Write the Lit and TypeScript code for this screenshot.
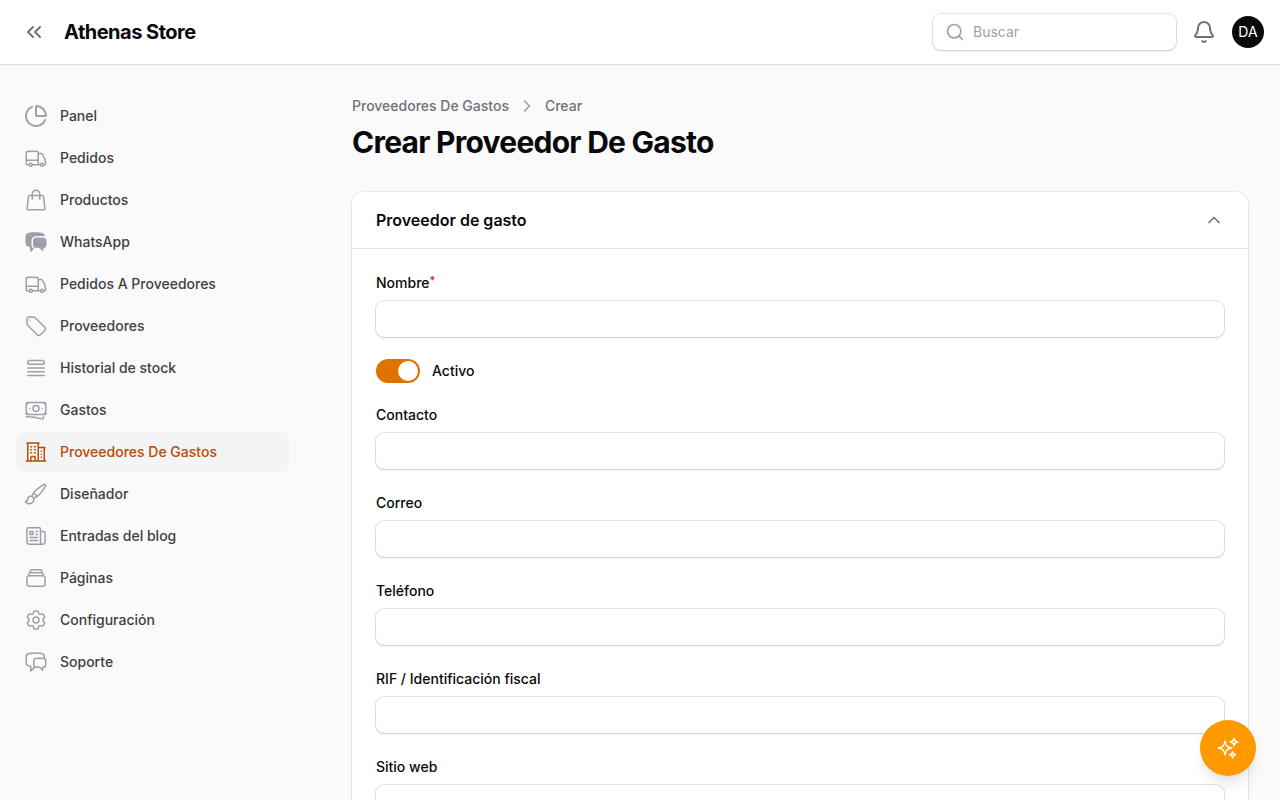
import { LitElement, html, svg, css } from "lit";
import { customElement, property } from "lit/decorators.js";
import { classMap } from "lit/directives/class-map.js";

const ICONS: Record<string, string[]> = {
  panel: [
    "M21 12c.552 0 1.005-.449.95-.998a10 10 0 0 0-8.953-8.951c-.55-.055-.998.398-.998.95v8a1 1 0 0 0 1 1z",
    "M21.21 15.89A10 10 0 1 1 8 2.83",
  ],
  truck: [
    "M8.25 18.75a1.5 1.5 0 0 1-3 0m3 0a1.5 1.5 0 0 0-3 0m3 0h6m-9 0H3.375a1.125 1.125 0 0 1-1.125-1.125V14.25m17.25 4.5a1.5 1.5 0 0 1-3 0m3 0a1.5 1.5 0 0 0-3 0m3 0h1.125c.621 0 1.129-.504 1.09-1.124a17.902 17.902 0 0 0-3.213-9.193 2.056 2.056 0 0 0-1.58-.86H14.25M16.5 18.75h-2.25m0-11.177v-.958c0-.568-.422-1.048-.987-1.106a48.554 48.554 0 0 0-10.026 0 1.106 1.106 0 0 0-.987 1.106v7.635m12-6.677v6.677m0 4.5v-4.5m0 0h-12",
  ],
  bag: [
    "M15.75 10.5V6a3.75 3.75 0 1 0-7.5 0v4.5m11.356-1.993 1.263 12c.07.665-.45 1.243-1.119 1.243H4.25a1.125 1.125 0 0 1-1.12-1.243l1.264-12A1.125 1.125 0 0 1 5.513 7.5h12.974c.576 0 1.059.435 1.119 1.007ZM8.625 10.5a.375.375 0 1 1-.75 0 .375.375 0 0 1 .75 0Zm7.5 0a.375.375 0 1 1-.75 0 .375.375 0 0 1 .75 0Z",
  ],
  chatSolid: [
    "M4.913 2.658c2.075-.27 4.19-.408 6.337-.408 2.147 0 4.262.139 6.337.408 1.922.25 3.291 1.861 3.405 3.727a4.403 4.403 0 0 0-1.032-.211 50.89 50.89 0 0 0-8.42 0c-2.358.196-4.04 2.19-4.04 4.434v4.286a4.47 4.47 0 0 0 2.433 3.984L7.28 21.53A.75.75 0 0 1 6 21v-4.03a48.527 48.527 0 0 1-1.087-.128C2.905 16.58 1.5 14.833 1.5 12.862V6.638c0-1.97 1.405-3.718 3.413-3.979Z",
    "M15.75 7.5c-1.376 0-2.739.057-4.086.169C10.124 7.797 9 9.103 9 10.609v4.285c0 1.507 1.128 2.814 2.67 2.94 1.243.102 2.5.157 3.768.165l2.782 2.781a.75.75 0 0 0 1.28-.53v-2.39l.33-.026c1.542-.125 2.67-1.433 2.67-2.94v-4.286c0-1.505-1.125-2.811-2.664-2.94A49.392 49.392 0 0 0 15.75 7.5Z",
  ],
  tag: [
    "M9.568 3H5.25A2.25 2.25 0 0 0 3 5.25v4.318c0 .597.237 1.17.659 1.591l9.581 9.581c.699.699 1.78.872 2.607.33a18.095 18.095 0 0 0 5.223-5.223c.542-.827.369-1.908-.33-2.607L11.16 3.66A2.25 2.25 0 0 0 9.568 3Z",
    "M6 6h.008v.008H6V6Z",
  ],
  list: [
    "M3.75 12h16.5m-16.5 3.75h16.5M3.75 19.5h16.5M5.625 4.5h12.75a1.875 1.875 0 0 1 0 3.75H5.625a1.875 1.875 0 0 1 0-3.75Z",
  ],
  banknotes: [
    "M2.25 18.75a60.07 60.07 0 0 1 15.797 2.101c.727.198 1.453-.342 1.453-1.096V18.75M3.75 4.5v.75A.75.75 0 0 1 3 6h-.75m0 0v-.375c0-.621.504-1.125 1.125-1.125H20.25M2.25 6v9m18-10.5v.75c0 .414.336.75.75.75h.75m-1.5-1.5h.375c.621 0 1.125.504 1.125 1.125v9.75c0 .621-.504 1.125-1.125 1.125h-.375m1.5-1.5H21a.75.75 0 0 0-.75.75v.75m0 0H3.75m0 0h-.375a1.125 1.125 0 0 1-1.125-1.125V15m1.5 1.5v-.75A.75.75 0 0 0 3 15h-.75M15 10.5a3 3 0 1 1-6 0 3 3 0 0 1 6 0Zm3 0h.008v.008H18V10.5Zm-12 0h.008v.008H6V10.5Z",
  ],
  building: [
    "M2.25 21h19.5m-18-18v18m10.5-18v18m6-13.5V21M6.75 6.75h.75m-.75 3h.75m-.75 3h.75m3-6h.75m-.75 3h.75m-.75 3h.75M6.75 21v-3.375c0-.621.504-1.125 1.125-1.125h2.25c.621 0 1.125.504 1.125 1.125V21M3 3h12m-.75 4.5H21m-3.75 3.75h.008v.008h-.008v-.008Zm0 3h.008v.008h-.008v-.008Zm0 3h.008v.008h-.008v-.008Z",
  ],
  brush: [
    "M9.53 16.122a3 3 0 0 0-5.78 1.128 2.25 2.25 0 0 1-2.4 2.245 4.5 4.5 0 0 0 8.4-2.245c0-.399-.078-.78-.22-1.128Zm0 0a15.998 15.998 0 0 0 3.388-1.62m-5.043-.025a15.994 15.994 0 0 1 1.622-3.395m3.42 3.42a15.995 15.995 0 0 0 4.764-4.648l3.876-5.814a1.151 1.151 0 0 0-1.597-1.597L14.146 6.32a15.996 15.996 0 0 0-4.649 4.763m3.42 3.42a6.776 6.776 0 0 0-3.42-3.42",
  ],
  newspaper: [
    "M12 7.5h1.5m-1.5 3h1.5m-7.5 3h7.5m-7.5 3h7.5m3-9h3.375c.621 0 1.125.504 1.125 1.125V18a2.25 2.25 0 0 1-2.25 2.25M16.5 7.5V18a2.25 2.25 0 0 0 2.25 2.25M16.5 7.5V4.875c0-.621-.504-1.125-1.125-1.125H4.125C3.504 3.75 3 4.254 3 4.875V18a2.25 2.25 0 0 0 2.25 2.25h13.5M6 7.5h3v3H6v-3Z",
  ],
  stack: [
    "M6 6.878V6a2.25 2.25 0 0 1 2.25-2.25h7.5A2.25 2.25 0 0 1 18 6v.878m-12 0c.235-.083.487-.128.75-.128h10.5c.263 0 .515.045.75.128m-12 0A2.25 2.25 0 0 0 4.5 9v.878m13.5-3A2.25 2.25 0 0 1 19.5 9v.878m0 0a2.246 2.246 0 0 0-.75-.128H5.25c-.263 0-.515.045-.75.128m15 0A2.25 2.25 0 0 1 21 12v6a2.25 2.25 0 0 1-2.25 2.25H5.25A2.25 2.25 0 0 1 3 18v-6c0-.98.626-1.813 1.5-2.122",
  ],
  cog: [
    "M9.594 3.94c.09-.542.56-.94 1.11-.94h2.593c.55 0 1.02.398 1.11.94l.213 1.281c.063.374.313.686.645.87.074.04.147.083.22.127.325.196.72.257 1.075.124l1.217-.456a1.125 1.125 0 0 1 1.37.49l1.296 2.247a1.125 1.125 0 0 1-.26 1.431l-1.003.827c-.293.241-.438.613-.43.992a7.723 7.723 0 0 1 0 .255c-.008.378.137.75.43.991l1.004.827c.424.35.534.955.26 1.43l-1.298 2.247a1.125 1.125 0 0 1-1.369.491l-1.217-.456c-.355-.133-.75-.072-1.076.124a6.47 6.47 0 0 1-.22.128c-.331.183-.581.495-.644.869l-.213 1.281c-.09.543-.56.94-1.11.94h-2.594c-.55 0-1.019-.398-1.11-.94l-.213-1.281c-.062-.374-.312-.686-.644-.87a6.52 6.52 0 0 1-.22-.127c-.325-.196-.72-.257-1.076-.124l-1.217.456a1.125 1.125 0 0 1-1.369-.49l-1.297-2.247a1.125 1.125 0 0 1 .26-1.431l1.004-.827c.292-.24.437-.613.43-.991a6.932 6.932 0 0 1 0-.255c.007-.38-.138-.751-.43-.992l-1.004-.827a1.125 1.125 0 0 1-.26-1.43l1.297-2.247a1.125 1.125 0 0 1 1.37-.491l1.216.456c.356.133.751.072 1.076-.124.072-.044.146-.086.22-.128.332-.183.582-.495.644-.869l.214-1.28Z",
    "M15 12a3 3 0 1 1-6 0 3 3 0 0 1 6 0Z",
  ],
  chat: [
    "M20.25 8.511c.884.284 1.5 1.128 1.5 2.097v4.286c0 1.136-.847 2.1-1.98 2.193-.34.027-.68.052-1.02.072v3.091l-3-3c-1.354 0-2.694-.055-4.02-.163a2.115 2.115 0 0 1-.825-.242m9.345-8.334a2.126 2.126 0 0 0-.476-.095 48.64 48.64 0 0 0-8.048 0c-1.131.094-1.976 1.057-1.976 2.192v4.286c0 .837.46 1.58 1.155 1.951m9.345-8.334V6.637c0-1.621-1.152-3.026-2.76-3.235A48.455 48.455 0 0 0 11.25 3c-2.115 0-4.198.137-6.24.402-1.608.209-2.76 1.614-2.76 3.235v6.226c0 1.621 1.152 3.026 2.76 3.235.577.075 1.157.14 1.74.194V21l4.155-4.155",
  ],
  bell: [
    "M10.268 21a2 2 0 0 0 3.464 0",
    "M3.262 15.326A1 1 0 0 0 4 17h16a1 1 0 0 0 .74-1.673C19.41 13.956 18 12.499 18 8A6 6 0 0 0 6 8c0 4.499-1.411 5.956-2.738 7.326",
  ],
  search: ["M3 11a8 8 0 1 0 16 0 8 8 0 1 0-16 0", "m21 21-4.34-4.34"],
  collapse: ["m11 17-5-5 5-5", "m18 17-5-5 5-5"],
  right: ["m9 18 6-6-6-6"],
  up: ["m18 15-6-6-6 6"],
  sparkles: [
    "M9.813 15.904 9 18.75l-.813-2.846a4.5 4.5 0 0 0-3.09-3.09L2.25 12l2.846-.813a4.5 4.5 0 0 0 3.09-3.09L9 5.25l.813 2.846a4.5 4.5 0 0 0 3.09 3.09L15.75 12l-2.846.813a4.5 4.5 0 0 0-3.09 3.09ZM18.259 8.715 18 9.75l-.259-1.035a3.375 3.375 0 0 0-2.455-2.456L14.25 6l1.036-.259a3.375 3.375 0 0 0 2.455-2.456L18 2.25l.259 1.035a3.375 3.375 0 0 0 2.456 2.456L21.75 6l-1.035.259a3.375 3.375 0 0 0-2.456 2.456ZM16.894 20.567 16.5 21.75l-.394-1.183a2.25 2.25 0 0 0-1.423-1.423L13.5 18.75l1.183-.394a2.25 2.25 0 0 0 1.423-1.423l.394-1.183.394 1.183a2.25 2.25 0 0 0 1.423 1.423l1.183.394-1.183.394a2.25 2.25 0 0 0-1.423 1.423Z",
  ],
};

@customElement("app-icon")
class AppIcon extends LitElement {
  @property() name = "";
  @property({ type: Number }) stroke = 1.5;
  @property({ type: Boolean }) solid = false;

  static styles = css`
    :host {
      display: block;
      flex: none;
      width: 24px;
      height: 24px;
    }
    .glyph {
      display: block;
      width: 100%;
      height: 100%;
    }
  `;

  render() {
    return html`<svg
      class="glyph"
      viewBox="0 0 24 24"
      aria-hidden="true"
      fill=${this.solid ? "currentColor" : "none"}
      stroke=${this.solid ? "none" : "currentColor"}
      stroke-width=${this.stroke}
      stroke-linecap="round"
      stroke-linejoin="round"
    >
      ${(ICONS[this.name] ?? []).map((d) => svg`<path d=${d}></path>`)}
    </svg>`;
  }
}

interface NavItem {
  label: string;
  icon: string;
  solid?: boolean;
  active?: boolean;
  stroke?: number;
}

const NAV: NavItem[] = [
  { label: "Panel", icon: "panel", stroke: 2 },
  { label: "Pedidos", icon: "truck" },
  { label: "Productos", icon: "bag" },
  { label: "WhatsApp", icon: "chatSolid", solid: true },
  { label: "Pedidos A Proveedores", icon: "truck" },
  { label: "Proveedores", icon: "tag" },
  { label: "Historial de stock", icon: "list" },
  { label: "Gastos", icon: "banknotes" },
  { label: "Proveedores De Gastos", icon: "building", active: true },
  { label: "Diseñador", icon: "brush" },
  { label: "Entradas del blog", icon: "newspaper" },
  { label: "Páginas", icon: "stack" },
  { label: "Configuración", icon: "cog" },
  { label: "Soporte", icon: "chat" },
];

const FIELDS = [
  { id: "contacto", label: "Contacto", type: "text" },
  { id: "correo", label: "Correo", type: "email" },
  { id: "telefono", label: "Teléfono", type: "tel" },
  { id: "rif", label: "RIF / Identificación fiscal", type: "text" },
  { id: "web", label: "Sitio web", type: "url" },
];

@customElement("app-root")
class AppRoot extends LitElement {
  static styles = css`
    :host {
      display: block;
      font-family: Inter, "Liberation Sans", sans-serif;
      font-size: 14px;
      line-height: 20px;
      color: #09090b;
    }
    * {
      box-sizing: border-box;
    }
    button,
    input {
      font: inherit;
      color: inherit;
      margin: 0;
    }
    button {
      padding: 0;
      border: 0;
      background: none;
      cursor: pointer;
    }
    a {
      color: inherit;
      text-decoration: none;
    }
    .shell {
      display: flex;
      flex-direction: column;
      height: 100vh;
      background: #fafafa;
    }
    .topbar {
      display: flex;
      flex: none;
      align-items: center;
      gap: 12px;
      height: 64px;
      padding: 0 16px;
      background: #fff;
      box-shadow: 0 0 0 1px rgba(9, 9, 11, 0.08), 0 1px 2px rgba(0, 0, 0, 0.05);
      z-index: 1;
    }
    .collapse {
      display: grid;
      place-items: center;
      width: 36px;
      height: 36px;
      color: #71717b;
    }
    .brand {
      font-size: 20px;
      font-weight: 700;
      letter-spacing: -0.025em;
    }
    .tools {
      display: flex;
      align-items: center;
      gap: 16px;
      margin-left: auto;
    }
    .control {
      background: #fff;
      border: 0;
      border-radius: 8px;
      box-shadow: 0 0 0 1px rgba(9, 9, 11, 0.1), 0 1px 3px rgba(0, 0, 0, 0.1),
        0 1px 2px -1px rgba(0, 0, 0, 0.1);
    }
    .search {
      display: flex;
      align-items: center;
      gap: 8px;
      width: 243px;
      height: 36px;
      padding: 0 12px;
      color: #9f9fa9;
    }
    .small {
      width: 20px;
      height: 20px;
    }
    .query {
      flex: 1;
      min-width: 0;
      padding: 0;
      border: 0;
      outline: 0;
      background: none;
      color: #09090b;
    }
    .query::placeholder {
      color: #9f9fa9;
      opacity: 1;
    }
    .bell {
      color: #71717b;
    }
    .avatar {
      width: 32px;
      height: 32px;
      border-radius: 50%;
      background: #09090b;
      color: #fff;
    }
    .body {
      display: flex;
      flex: 1;
      min-height: 0;
    }
    .sidebar {
      flex: none;
      width: 320px;
      padding: 32px 31px 32px 16px;
      overflow-y: auto;
      scrollbar-width: none;
    }
    .menu {
      display: flex;
      flex-direction: column;
      gap: 2px;
      margin: 0;
      padding: 0;
      list-style: none;
    }
    .item {
      display: flex;
      align-items: center;
      gap: 12px;
      padding: 8px;
      border-radius: 8px;
      color: #3f3f46;
      font-weight: 500;
    }
    .item app-icon {
      color: #9f9fa9;
    }
    .item.active {
      background: #f4f4f5;
    }
    .item.active,
    .item.active app-icon {
      color: #bb4d00;
    }
    .main {
      flex: 1;
      min-width: 0;
      padding: 32px;
      overflow-y: auto;
      scrollbar-width: none;
    }
    .crumbs {
      display: flex;
      align-items: center;
      gap: 8px;
      margin: 0 0 8px;
      padding: 0;
      list-style: none;
      color: #71717b;
      font-weight: 500;
    }
    .crumb {
      display: flex;
      align-items: center;
      gap: 8px;
    }
    .crumb app-icon {
      color: #9f9fa9;
    }
    .title {
      margin: 0 0 32px;
      font-size: 30px;
      line-height: 36px;
      font-weight: 700;
      letter-spacing: -0.025em;
    }
    .card {
      border-radius: 12px;
      background: #fff;
      box-shadow: 0 0 0 1px rgba(9, 9, 11, 0.05), 0 1px 3px rgba(0, 0, 0, 0.1),
        0 1px 2px -1px rgba(0, 0, 0, 0.1);
    }
    .card-head {
      display: flex;
      align-items: center;
      justify-content: space-between;
      padding: 16px 24px;
    }
    .card-title {
      margin: 0;
      font-size: 16px;
      line-height: 24px;
      font-weight: 600;
    }
    .toggle-card {
      color: #71717b;
    }
    .form {
      display: flex;
      flex-direction: column;
      gap: 24px;
      padding: 24px;
      border-top: 1px solid #e4e4e7;
    }
    .field {
      display: flex;
      flex-direction: column;
      gap: 8px;
      font-weight: 500;
    }
    .required {
      color: #e7000b;
      font-size: 11px;
      line-height: 0;
      vertical-align: 4px;
    }
    .input {
      width: 100%;
      height: 36px;
      padding: 0 12px;
      font-weight: 400;
    }
    .switch-row {
      display: flex;
      align-items: center;
      gap: 12px;
      height: 20px;
      font-weight: 500;
    }
    .switch {
      appearance: none;
      display: flex;
      width: 44px;
      height: 24px;
      padding: 2px;
      border-radius: 12px;
      background: #e4e4e7;
      cursor: pointer;
    }
    .switch::before {
      content: "";
      width: 20px;
      height: 20px;
      border-radius: 50%;
      background: #fff;
    }
    .switch:checked {
      justify-content: flex-end;
      background: #e17100;
    }
    .assistant {
      position: fixed;
      right: 24px;
      bottom: 24px;
      z-index: 2;
      display: grid;
      place-items: center;
      width: 56px;
      height: 56px;
      border-radius: 50%;
      background: #fe9a00;
      color: #fff;
      box-shadow: 0 10px 15px -3px rgba(0, 0, 0, 0.1),
        0 4px 6px -4px rgba(0, 0, 0, 0.1);
    }
  `;

  render() {
    return html`
      <div class="shell">
        <header class="topbar">
          <button class="collapse" type="button" aria-label="Contraer barra lateral">
            <app-icon name="collapse" stroke="2"></app-icon>
          </button>
          <a class="brand" href="#">Athenas Store</a>
          <div class="tools">
            <label class="search control">
              <app-icon class="small" name="search" stroke="2"></app-icon>
              <input class="query" type="search" placeholder="Buscar" aria-label="Buscar" />
            </label>
            <button class="bell" type="button" aria-label="Notificaciones">
              <app-icon name="bell" stroke="2"></app-icon>
            </button>
            <button class="avatar" type="button" aria-label="Menú de usuario">DA</button>
          </div>
        </header>

        <div class="body">
          <nav class="sidebar">
            <ul class="menu">
              ${NAV.map(
                (n) => html`<li>
                  <a class=${classMap({ item: true, active: !!n.active })} href="#">
                    <app-icon
                      name=${n.icon}
                      ?solid=${n.solid}
                      stroke=${n.stroke ?? 1.5}
                    ></app-icon>
                    <span>${n.label}</span>
                  </a>
                </li>`
              )}
            </ul>
          </nav>

          <main class="main">
            <ol class="crumbs">
              <li class="crumb"><a href="#">Proveedores De Gastos</a></li>
              <li class="crumb">
                <app-icon class="small" name="right" stroke="2"></app-icon>
                <a href="#">Crear</a>
              </li>
            </ol>
            <h1 class="title">Crear Proveedor De Gasto</h1>

            <section class="card">
              <header class="card-head">
                <h2 class="card-title">Proveedor de gasto</h2>
                <button class="toggle-card" type="button" aria-label="Contraer sección">
                  <app-icon class="small" name="up" stroke="2"></app-icon>
                </button>
              </header>
              <form class="form">
                <div class="field">
                  <label for="nombre">Nombre<span class="required">*</span></label>
                  <input class="input control" id="nombre" type="text" required />
                </div>
                <div class="switch-row">
                  <input class="switch" id="activo" type="checkbox" role="switch" checked />
                  <label for="activo">Activo</label>
                </div>
                ${FIELDS.map(
                  (f) => html`<div class="field">
                    <label for=${f.id}>${f.label}</label>
                    <input class="input control" id=${f.id} type=${f.type} />
                  </div>`
                )}
              </form>
            </section>
          </main>
        </div>

        <button class="assistant" type="button" aria-label="Asistente">
          <app-icon name="sparkles"></app-icon>
        </button>
      </div>
    `;
  }
}
